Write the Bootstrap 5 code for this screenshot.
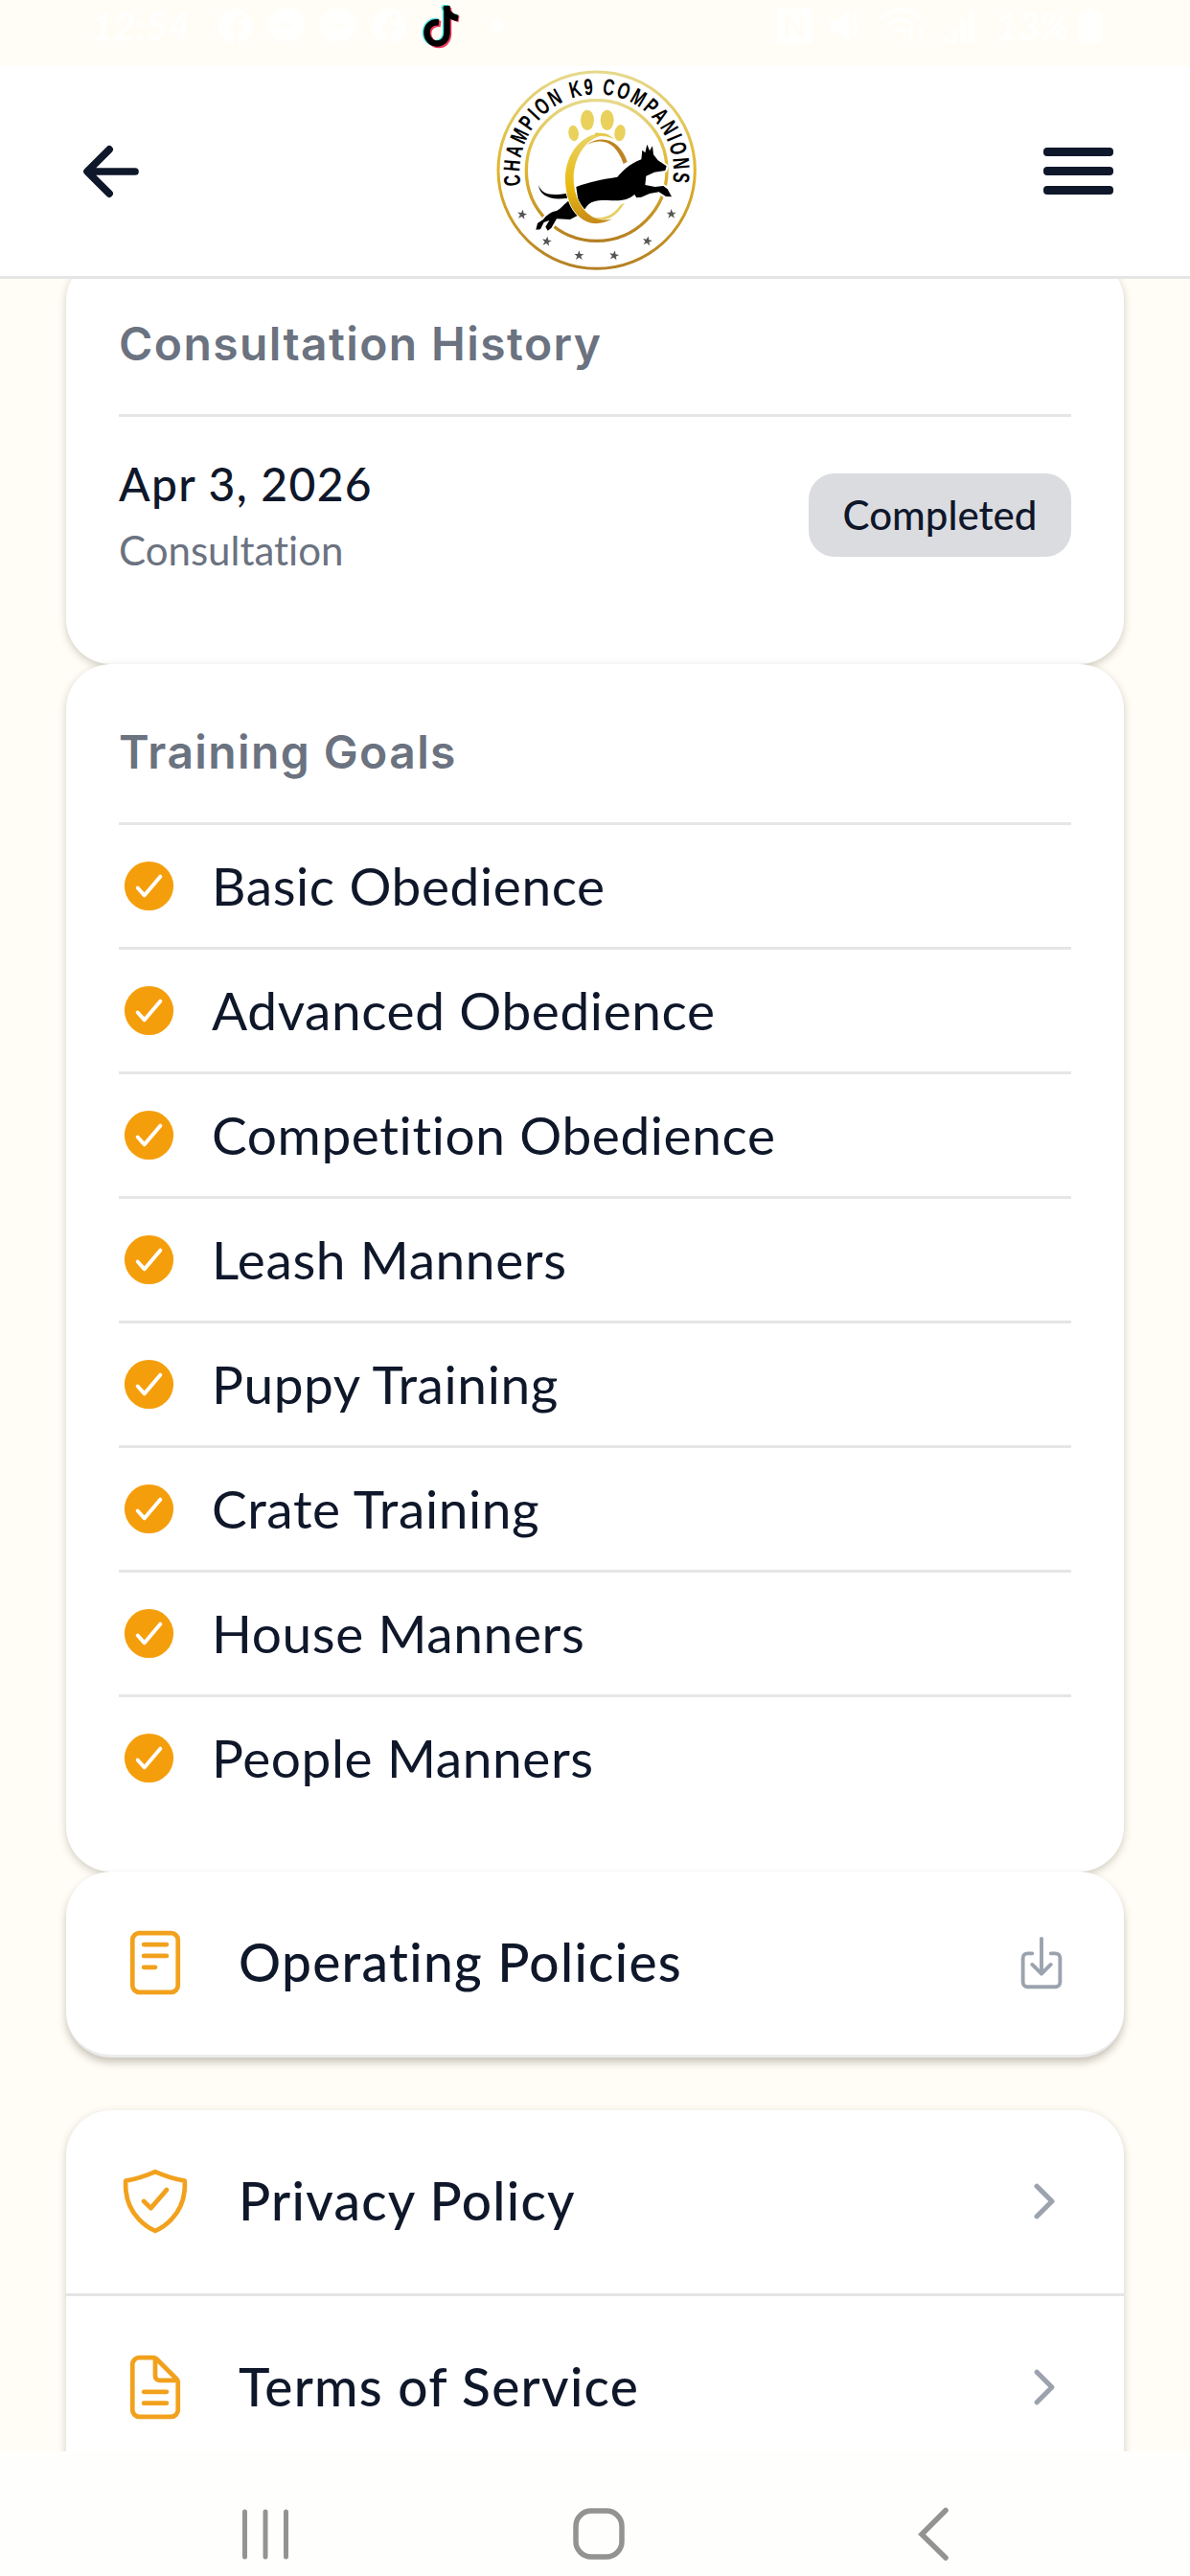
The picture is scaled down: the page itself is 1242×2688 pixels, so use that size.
<!DOCTYPE html>
<html lang="en">
<head>
    <meta charset="utf-8">
    <meta name="viewport" content="width=device-width, initial-scale=1">
    <title>Champion K9 Companions</title>
    <link href="https://cdn.jsdelivr.net/npm/bootstrap@5.3.0/dist/css/bootstrap.min.css" rel="stylesheet">
    <style>
        body {
            background: #fffdf6;
            color: #0f172a;
            font-family: "Lato", "Liberation Sans", sans-serif;
            font-variant-ligatures: none;
            height: 2688px;
            overflow: hidden;
        }

        .status-bar {
            height: 69px;
            padding: 0 92px 15px 95px;
            color: #fffffd;
        }

        .status-text {
            font-size: 40px;
            font-style: italic;
            font-weight: 700;
            line-height: 1;
        }

        .status-clock { width: 133px; }
        .tray-icons { gap: 16px; }
        .signal-icons { gap: 17px; }
        .tray-dot { margin-left: 15px; }
        .battery-text { margin: 0 10px 0 19px; }

        .app-header {
            height: 222px;
            border-bottom: 3px solid #e5e5e5;
            padding: 0 75px;
            z-index: 1;
        }

        .side-slot { width: 96px; }
        .club-logo { margin: -10px 0; }

        .line-icon {
            fill: none;
            stroke: currentColor;
            stroke-width: 32;
            stroke-linecap: round;
            stroke-linejoin: round;
            flex-shrink: 0;
        }

        .line-icon.thick { stroke-width: 48; }

        .page-body {
            padding: 0 69px;
            min-height: 0;
        }

        .panel {
            background: #fff;
            border-radius: 47px;
            box-shadow: 0 3px 9px rgba(60, 50, 30, 0.24);
            flex-shrink: 0;
        }

        .panel-history { margin-top: -24px; height: 426px; padding: 56px 55px 0; }
        .panel-goals { height: 1260px; padding: 56px 55px 0; }
        .panel-policy { height: 194px; border-bottom: 3px solid #ececec; box-shadow: 0 5px 9px rgba(60, 50, 30, 0.28); }
        .panel-legal { margin-top: 55px; height: 460px; }

        .panel-title {
            font-family: "Inter", "Liberation Sans", sans-serif;
            font-size: 48px;
            font-weight: 600;
            letter-spacing: 1.4px;
            line-height: 72px;
            color: #6b7280;
            margin: 0;
            padding-bottom: 37px;
            border-bottom: 3px solid #e6e6e6;
        }

        .visit-row { padding-top: 35px; }
        .visit-date { font-size: 48px; font-weight: 500; letter-spacing: 1.3px; line-height: 69px; }
        .visit-kind { font-size: 42px; line-height: 60px; margin-top: 5px; color: #6b7280; }

        .status-pill {
            width: 274px;
            height: 87px;
            border-radius: 27px;
            background: #dbdce0;
            font-size: 42px;
            font-weight: 500;
        }

        .goal-row {
            height: 130px;
            gap: 34px;
            font-size: 55px;
            letter-spacing: 0.6px;
            border-bottom: 3px solid #e6e6e6;
        }

        .goal-row:last-child { border-bottom: 0; height: 127px; }

        .menu-row {
            height: 191px;
            padding: 0 55px 2px;
            font-size: 55px;
            font-weight: 500;
            letter-spacing: 1.3px;
        }

        .menu-row + .menu-row { border-top: 3px solid #e5e5e5; height: 194px; }
        .menu-label { margin-left: 49px; }
        .amber { color: #f2a11d; }
        .muted-icon { color: #9ca3af; }

        .system-nav {
            height: 130px;
            padding: 0 248px;
            background: #fefefc;
            color: #939391;
            z-index: 1;
        }
    </style>
</head>
<body class="d-flex flex-column">

    <!-- shared symbols -->
    <svg class="d-none">
        <symbol id="check-circle" viewBox="0 0 512 512">
            <circle cx="256" cy="256" r="208" fill="#f59e0b" stroke="none"/>
            <path d="M352 176L217.6 336 160 272" stroke="#fff"/>
        </symbol>
        <symbol id="chevron" viewBox="0 0 512 512">
            <path d="M184 112l144 144-144 144"/>
        </symbol>
        <symbol id="facebook" viewBox="0 0 36 36">
            <path fill="currentColor" d="M18 0a18 18 0 0 1 3 35.7V23h4.5l1-5.5H21v-3.2c0-2 1-3 3-3h2.6V6.8C21 5.6 15.5 7 15.5 13.5v4H11V23h4.5v12.8A18 18 0 0 1 18 0z"/>
        </symbol>
        <symbol id="messenger" viewBox="0 0 38 38">
            <path fill="currentColor" fill-rule="evenodd" d="M19 0c11 0 19 7.5 19 17.5S30 35 19 35c-2 0-4-.3-5.500-.8L8 37v-5.500C3 28.500 0 23.500 0 17.500 0 7.500 8 0 19 0zM8 22l8-8 5 4 8-4-8 8-5-4z"/>
        </symbol>
    </svg>

    <div class="status-bar d-flex align-items-center flex-shrink-0">
        <span class="status-text status-clock">12:54</span>
        <div class="tray-icons d-flex align-items-center">
            <svg width="36" height="36"><use href="#facebook"/></svg>
            <svg width="38" height="38"><use href="#messenger"/></svg>
            <svg width="38" height="38"><use href="#messenger"/></svg>
            <svg width="36" height="36"><use href="#facebook"/></svg>
            <!-- music note, cyan and red offsets below the black one -->
            <svg width="41" height="48" viewBox="0 0 41 48">
                <g fill="none" stroke-width="6.5">
                    <path stroke="#4fe3df" d="M17 19C9 18 4 24 4 31c0 7 5 11 10.5 11S25 38 25 31V2M23.5 3c1 7 6 11 13 12"/>
                    <path stroke="#ee3a5c" d="M20 22c-8-1-13 4-13 10s5 12 11 12 10-5 10-12V5M27 5c1 7 6 11 12 12"/>
                    <path stroke="#000" d="M18 20.5c-8-1-12.5 4-12.5 10.5S10 42.5 16 42.5 26.5 38 26.5 31V3M25.5 4c1 7 6 11 12.5 12"/>
                </g>
            </svg>
            <svg class="tray-dot" width="14" height="14"><circle cx="7" cy="7" r="6.5" fill="currentColor"/></svg>
        </div>
        <div class="signal-icons d-flex align-items-center ms-auto">
            <svg width="36" height="36" viewBox="0 0 36 36"><path fill="currentColor" fill-rule="evenodd" d="M0 0h36v36H0zM8 6v24h4V14l12 16h4V6h-4v16L12 6z"/></svg>
            <svg width="36" height="36" viewBox="0 0 36 36"><path fill="currentColor" d="M2 12h8L22 2v32L10 24H2z"/><path stroke="currentColor" stroke-width="3" fill="none" d="M26 4l4 5-4 5 4 5-4 5 4 5"/></svg>
            <svg width="50" height="40" viewBox="0 0 50 40"><path fill="none" stroke="currentColor" stroke-width="4" d="M2 13C14 0 32 0 42 12M8 20c9-9 20-9 28 0M15 27c4-5 10-5 14 0M34 22v14M44 36V22"/></svg>
            <svg width="36" height="36" viewBox="0 0 36 36"><path fill="currentColor" d="M0 30h6v6H0zM9 22h6v14H9zM18 12h6v24h-6zM27 2h6v34h-6z"/></svg>
        </div>
        <span class="status-text battery-text">13%</span>
        <svg width="24" height="36" viewBox="0 0 24 36"><path fill="currentColor" d="M8 0h8v4h5a3 3 0 0 1 3 3v26a3 3 0 0 1-3 3H3a3 3 0 0 1-3-3V7a3 3 0 0 1 3-3h5z"/></svg>
    </div>

    <header class="app-header bg-white d-flex align-items-center justify-content-between flex-shrink-0 position-relative">
        <div class="side-slot">
            <svg class="line-icon thick d-block" width="82" height="82" viewBox="0 0 512 512"><path d="M244 400L100 256l144-144M120 256h292"/></svg>
        </div>

        <svg class="club-logo" width="240" height="240" viewBox="0 0 720 720">
            <defs>
                <linearGradient id="gold" x1="0" y1="0" x2="0" y2="1">
                    <stop offset="0" stop-color="#e6d98c"/>
                    <stop offset=".5" stop-color="#e0b52a"/>
                    <stop offset="1" stop-color="#b47f22"/>
                </linearGradient>
                <linearGradient id="ringGold" x1="0" y1="0" x2="0" y2="1">
                    <stop offset="0" stop-color="#e8d468"/>
                    <stop offset=".6" stop-color="#e9b90f"/>
                    <stop offset="1" stop-color="#c58a1a"/>
                </linearGradient>
                <path id="nameArc" d="M128 403A241 241 0 1 1 602 403"/>
                <path id="star" d="M0-15L4-4 15-4 6 3 10 14 0 7-10 14-6 3-15-4-4-4z"/>
            </defs>
            <circle cx="365" cy="356" r="308" fill="none" stroke="url(#gold)" stroke-width="9"/>
            <circle cx="365" cy="357" r="220" fill="none" stroke="url(#gold)" stroke-width="10"/>
            <!-- extra tracking before the squeeze keeps the letters narrow -->
            <text font-family="Liberation Sans, sans-serif" font-weight="700" font-size="72" letter-spacing="10"><textPath href="#nameArc" textLength="842" lengthAdjust="spacingAndGlyphs">CHAMPION K9 COMPANIONS</textPath></text>
            <g fill="#e9d15c">
                <ellipse cx="293" cy="240" rx="16" ry="25" transform="rotate(-8 293 240)"/>
                <ellipse cx="336" cy="199" rx="21" ry="32"/>
                <ellipse cx="398" cy="199" rx="21" ry="32"/>
                <ellipse cx="438" cy="239" rx="17" ry="26" transform="rotate(10 438 239)"/>
            </g>
            <path d="M335 276C385 240 440 265 461 329L449 336C428 275 390 250 335 276z" fill="#bd8420"/>
            <path d="M333 498C385 528 425 505 453 458L440 464C412 503 380 512 333 498z" fill="#e5cf62"/>
            <!-- leaping dog -->
            <g stroke="#fff" stroke-width="12" stroke-linejoin="round" paint-order="stroke">
                <path d="M183 402C194 432 220 437 274 428V443C222 452 187 436 183 402z"/>
                <path d="M280 450C262 462 258 473 240 483 220 487 208 497 197 511L180 522 175 542 189 541 200 519 217 513 205 533 212 545 223 537 240 508 282 510 311 495 303 468z"/>
                <path d="M301 408C345 391 385 384 430 377 445 362 465 336 505 322L508 293 517 301 523 275 531 295 540 280 543 307 557 325 584 343 580 357 546 362 520 374 517 402 548 408 574 405 587 415 600 439 582 438 560 424 531 429 505 440 490 442 484 432C463 450 440 453 400 450 370 450 345 448 327 479L310 470z"/>
            </g>
            <path d="M412 246C340 220 267 290 267 382 267 482 330 555 414 508 350 528 293 465 293 382 293 305 345 237 412 246z" fill="url(#ringGold)" stroke="#fff" stroke-width="4" paint-order="stroke"/>
            <path d="M360 239Q395 236 420 258 390 245 360 249z" fill="#e6ca4c"/>
            <g fill="#555">
                <use href="#star" transform="translate(132 494) rotate(10)"/>
                <use href="#star" transform="translate(209 578) rotate(10)"/>
                <use href="#star" x="310" y="622"/>
                <use href="#star" transform="translate(420 622) rotate(10)"/>
                <use href="#star" transform="translate(524 577) rotate(12)"/>
                <use href="#star" x="599" y="492"/>
            </g>
        </svg>

        <div class="side-slot d-flex justify-content-end">
            <svg width="80" height="50" viewBox="0 0 80 50" fill="#0f172a">
                <rect x="2" y="0" width="73" height="9" rx="4"/>
                <rect x="2" y="20" width="73" height="9" rx="4"/>
                <rect x="2" y="40" width="73" height="9" rx="4"/>
            </svg>
        </div>
    </header>

    <main class="page-body d-flex flex-column flex-grow-1 overflow-hidden">
        <section class="panel panel-history">
            <h2 class="panel-title">Consultation History</h2>
            <div class="visit-row d-flex justify-content-between align-items-center">
                <div>
                    <div class="visit-date">Apr 3, 2026</div>
                    <div class="visit-kind">Consultation</div>
                </div>
                <span class="status-pill d-flex align-items-center justify-content-center">Completed</span>
            </div>
        </section>

        <section class="panel panel-goals">
            <h2 class="panel-title">Training Goals</h2>
            <div>
                <div class="goal-row d-flex align-items-center"><svg class="line-icon" width="63" height="63"><use href="#check-circle"/></svg><span>Basic Obedience</span></div>
                <div class="goal-row d-flex align-items-center"><svg class="line-icon" width="63" height="63"><use href="#check-circle"/></svg><span>Advanced Obedience</span></div>
                <div class="goal-row d-flex align-items-center"><svg class="line-icon" width="63" height="63"><use href="#check-circle"/></svg><span>Competition Obedience</span></div>
                <div class="goal-row d-flex align-items-center"><svg class="line-icon" width="63" height="63"><use href="#check-circle"/></svg><span>Leash Manners</span></div>
                <div class="goal-row d-flex align-items-center"><svg class="line-icon" width="63" height="63"><use href="#check-circle"/></svg><span>Puppy Training</span></div>
                <div class="goal-row d-flex align-items-center"><svg class="line-icon" width="63" height="63"><use href="#check-circle"/></svg><span>Crate Training</span></div>
                <div class="goal-row d-flex align-items-center"><svg class="line-icon" width="63" height="63"><use href="#check-circle"/></svg><span>House Manners</span></div>
                <div class="goal-row d-flex align-items-center"><svg class="line-icon" width="63" height="63"><use href="#check-circle"/></svg><span>People Manners</span></div>
            </div>
        </section>

        <section class="panel panel-policy">
            <div class="menu-row d-flex align-items-center">
                <svg class="line-icon amber" width="76" height="76" viewBox="0 0 512 512"><rect x="96" y="48" width="320" height="416" rx="48"/><path d="M176 128h160M176 208h160M176 288h80"/></svg>
                <span class="menu-label">Operating Policies</span>
                <svg class="line-icon muted-icon ms-auto" width="62" height="62" viewBox="0 0 512 512"><path d="M336 176h40a40 40 0 0 1 40 40v208a40 40 0 0 1-40 40H136a40 40 0 0 1-40-40V216a40 40 0 0 1 40-40h40M176 272l80 80 80-80M256 48v288"/></svg>
            </div>
        </section>

        <section class="panel panel-legal">
            <div class="menu-row d-flex align-items-center">
                <svg class="line-icon amber" width="76" height="76" viewBox="0 0 512 512"><path d="M336 176L225.2 304 176 255.8M463.1 112.37C373.68 96.33 336.71 84.45 256 48c-80.71 36.45-117.68 48.33-207.1 64.37C32.7 369.13 240.58 457.79 256 464c15.42-6.21 223.3-94.87 207.1-351.63z"/></svg>
                <span class="menu-label">Privacy Policy</span>
                <svg class="line-icon thick muted-icon ms-auto" width="56" height="56"><use href="#chevron"/></svg>
            </div>
            <div class="menu-row d-flex align-items-center">
                <svg class="line-icon amber" width="76" height="76" viewBox="0 0 512 512"><path d="M416 221.25V416a48 48 0 0 1-48 48H144a48 48 0 0 1-48-48V96a48 48 0 0 1 48-48h98.75a32 32 0 0 1 22.62 9.37l141.26 141.26a32 32 0 0 1 9.37 22.62zM256 56v120a32 32 0 0 0 32 32h120M176 288h160M176 368h160"/></svg>
                <span class="menu-label">Terms of Service</span>
                <svg class="line-icon thick muted-icon ms-auto" width="56" height="56"><use href="#chevron"/></svg>
            </div>
        </section>
    </main>

    <nav class="system-nav d-flex justify-content-between pt-5 flex-shrink-0">
        <svg class="mt-2" width="58" height="60" viewBox="0 0 58 60"><path d="M7.5 7v47M29 7v47M50.5 7v47" stroke="currentColor" stroke-width="5" stroke-linecap="round"/></svg>
        <svg class="mt-2 me-2" width="58" height="60" viewBox="0 0 58 60"><rect x="5" y="6" width="48" height="48" rx="16" fill="none" stroke="currentColor" stroke-width="5.5"/></svg>
        <svg class="mt-2" width="42" height="60" viewBox="0 0 42 60"><path d="M35 5.5L10 30.500 35 55" fill="none" stroke="currentColor" stroke-width="5.5" stroke-linecap="round"/></svg>
    </nav>

    <script src="https://cdn.jsdelivr.net/npm/bootstrap@5.3.0/dist/js/bootstrap.bundle.min.js"></script>
</body>
</html>
